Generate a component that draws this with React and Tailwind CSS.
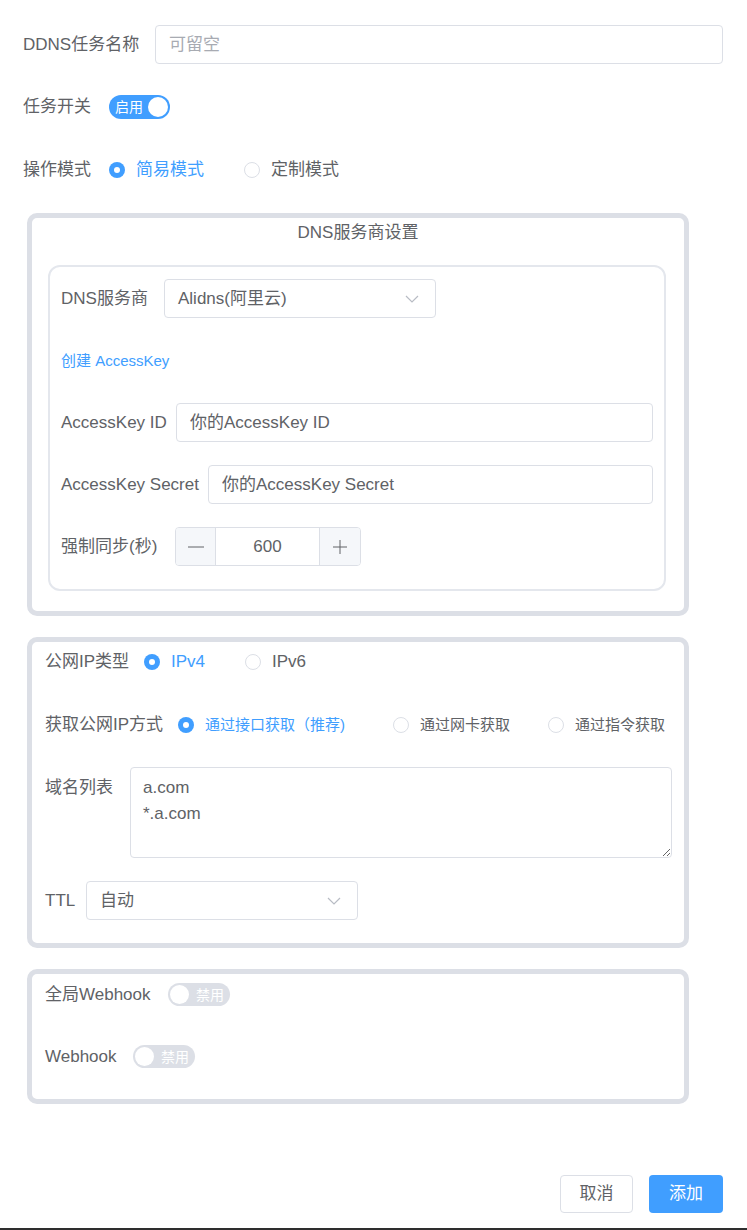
import React from "react";

const FONT = { fontFamily: '"Liberation Sans", "Noto Sans CJK SC", sans-serif' };

function Chevron() {
  return (
    <svg width="14" height="8" viewBox="0 0 14 8" fill="none">
      <path d="M1 1l6 6 6-6" stroke="#b8bcc4" strokeWidth="1.2" />
    </svg>
  );
}

function Radio({ checked, label, small }) {
  return (
    <div className="flex items-center gap-[11px]">
      {checked ? (
        <span className="w-4 h-4 rounded-full bg-[#409eff] flex items-center justify-center">
          <span className="w-[6px] h-[6px] rounded-full bg-white" />
        </span>
      ) : (
        <span className="w-4 h-4 rounded-full border border-[#dcdfe6] bg-white" />
      )}
      <span className={`${small ? "text-[15px]" : "text-[17px]"} ${checked ? "text-[#409eff]" : "text-[#606266]"}`}>
        {label}
      </span>
    </div>
  );
}

function SwitchOn() {
  return (
    <div className="w-[61px] h-[24px] rounded-full bg-[#409eff] flex items-center justify-between pl-[6px] pr-[2px]">
      <span className="text-[14px] text-white leading-none">启用</span>
      <span className="w-5 h-5 rounded-full bg-white" />
    </div>
  );
}

function SwitchOff() {
  return (
    <div className="w-[62px] h-[23px] rounded-full bg-[#dcdfe6] flex items-center justify-between pl-[2px] pr-[6px]">
      <span className="w-[19px] h-[19px] rounded-full bg-white" />
      <span className="text-[14px] text-white leading-none">禁用</span>
    </div>
  );
}

function Input({ value, placeholder, className = "" }) {
  return (
    <div className={`h-[39px] rounded-[4px] border border-[#dcdfe6] bg-white flex items-center px-[13px] ${className}`}>
      {value ? (
        <span className="text-[17px] text-[#606266]">{value}</span>
      ) : (
        <span className="text-[17px] text-[#a8abb2]">{placeholder}</span>
      )}
    </div>
  );
}

function Select({ value, className = "" }) {
  return (
    <div className={`h-[39px] rounded-[4px] border border-[#dcdfe6] bg-white flex items-center justify-between pl-[13px] pr-[16px] ${className}`}>
      <span className="text-[17px] text-[#606266]">{value}</span>
      <Chevron />
    </div>
  );
}

export default function App() {
  return (
    <div style={FONT} className="w-[747px] h-[1230px] bg-white text-[#606266] text-[17px] flex flex-col overflow-hidden">
      {/* Task name */}
      <div className="mt-[25px] h-[39px] flex items-center pl-[23px] pr-[24px]">
        <span className="w-[132px] shrink-0">DDNS任务名称</span>
        <Input placeholder="可留空" className="flex-1" />
      </div>

      {/* Switch */}
      <div className="mt-[31px] h-[24px] flex items-center pl-[23px]">
        <span className="w-[86px] shrink-0">任务开关</span>
        <SwitchOn />
      </div>

      {/* Mode */}
      <div className="mt-[39px] h-[24px] flex items-center pl-[23px]">
        <span className="w-[86px] shrink-0">操作模式</span>
        <div className="flex items-center gap-[40px]">
          <Radio checked label="简易模式" />
          <Radio label="定制模式" />
        </div>
      </div>

      {/* Card 1 */}
      <div className="mt-[31px] ml-[27px] w-[662px] h-[403px] border-[5px] border-[#dcdfe6] rounded-[10px] flex flex-col">
        <div className="h-[30px] flex items-center justify-center">DNS服务商设置</div>
        <div className="mt-[17px] ml-[16px] w-[618px] h-[326px] border-2 border-[#e4e7ed] rounded-[12px] flex flex-col pl-[11px] pr-[11px]">
          <div className="mt-[12px] flex items-center">
            <span className="w-[103px] shrink-0">DNS服务商</span>
            <Select value="Alidns(阿里云)" className="w-[272px]" />
          </div>
          <div className="mt-[33px] h-[20px] flex items-center text-[15px] text-[#409eff]">创建 AccessKey</div>
          <div className="mt-[32px] flex items-center">
            <span className="w-[115px] shrink-0">AccessKey ID</span>
            <Input value="你的AccessKey ID" className="flex-1" />
          </div>
          <div className="mt-[23px] flex items-center">
            <span className="w-[147px] shrink-0">AccessKey Secret</span>
            <Input value="你的AccessKey Secret" className="flex-1" />
          </div>
          <div className="mt-[23px] flex items-center">
            <span className="w-[114px] shrink-0">强制同步(秒)</span>
            <div className="w-[186px] h-[39px] rounded-[4px] border border-[#dcdfe6] flex overflow-hidden">
              <div className="w-[40px] bg-[#f5f7fa] border-r border-[#dcdfe6] flex items-center justify-center">
                <svg width="16" height="2" viewBox="0 0 16 2"><path d="M0 1h16" stroke="#606266" strokeWidth="1" /></svg>
              </div>
              <div className="flex-1 bg-white flex items-center justify-center text-[#606266]">600</div>
              <div className="w-[41px] bg-[#f5f7fa] border-l border-[#dcdfe6] flex items-center justify-center">
                <svg width="14" height="14" viewBox="0 0 14 14"><path d="M0 7h14M7 0v14" stroke="#606266" strokeWidth="1" /></svg>
              </div>
            </div>
          </div>
        </div>
      </div>

      {/* Card 2 */}
      <div className="mt-[21px] ml-[27px] w-[662px] h-[311px] border-[5px] border-[#dcdfe6] rounded-[10px] flex flex-col pl-[13px] pr-[12px]">
        <div className="mt-[8px] h-[24px] flex items-center">
          <span className="w-[99px] shrink-0">公网IP类型</span>
          <div className="flex items-center gap-[40px]">
            <Radio checked label="IPv4" />
            <Radio label="IPv6" />
          </div>
        </div>
        <div className="mt-[39px] h-[24px] flex items-center">
          <span className="w-[133px] shrink-0">获取公网IP方式</span>
          <div className="flex items-center">
            <Radio checked small label="通过接口获取（推荐)" />
            <div className="ml-[48px]"><Radio small label="通过网卡获取" /></div>
            <div className="ml-[38px]"><Radio small label="通过指令获取" /></div>
          </div>
        </div>
        <div className="mt-[30px] flex items-start">
          <span className="w-[85px] shrink-0 mt-[8px]">域名列表</span>
          <textarea
            readOnly
            defaultValue={"a.com\n*.a.com"}
            className="flex-1 h-[91px] rounded-[4px] border border-[#dcdfe6] px-[12px] pt-[7px] text-[17px] leading-[26px] text-[#606266] outline-none"
            style={FONT}
          />
        </div>
        <div className="mt-[23px] flex items-center">
          <span className="w-[41px] shrink-0">TTL</span>
          <Select value="自动" className="w-[272px]" />
        </div>
      </div>

      {/* Card 3 */}
      <div className="mt-[21px] ml-[27px] w-[662px] h-[135px] border-[5px] border-[#dcdfe6] rounded-[10px] flex flex-col pl-[13px]">
        <div className="mt-[9px] h-[23px] flex items-center">
          <span className="w-[123px] shrink-0">全局Webhook</span>
          <SwitchOff />
        </div>
        <div className="mt-[39px] h-[23px] flex items-center">
          <span className="w-[88px] shrink-0">Webhook</span>
          <SwitchOff />
        </div>
      </div>

      {/* Buttons */}
      <div className="mt-[71px] h-[38px] flex justify-end gap-[16px] pr-[24px]">
        <div className="w-[73px] h-[38px] rounded-[4px] border border-[#dcdfe6] bg-white flex items-center justify-center text-[#606266]">取消</div>
        <div className="w-[74px] h-[38px] rounded-[4px] bg-[#409eff] flex items-center justify-center text-white">添加</div>
      </div>

      <div className="mt-auto h-[2px] bg-[#2e2e2e]" />
    </div>
  );
}
